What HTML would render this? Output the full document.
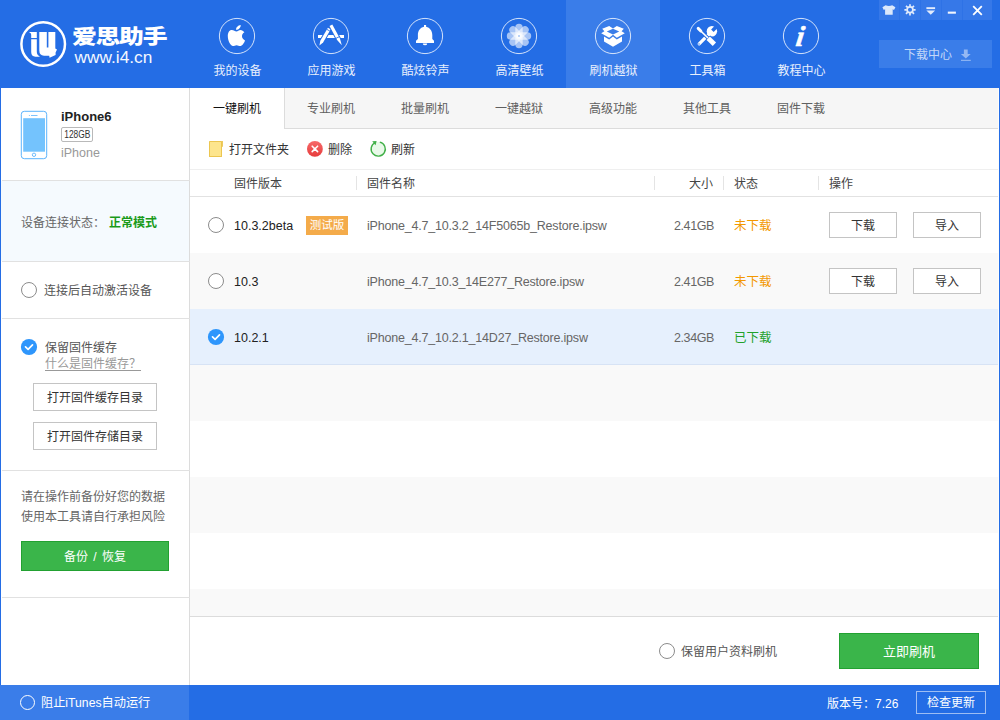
<!DOCTYPE html>
<html lang="zh-CN">
<head>
<meta charset="utf-8">
<title>爱思助手</title>
<style>
*{box-sizing:border-box;margin:0;padding:0}
html,body{width:1000px;height:720px;overflow:hidden;background:#fff}
body{position:relative;font-family:"Liberation Sans","Noto Sans CJK SC",sans-serif;font-size:12px;color:#333}
.abs{position:absolute}
#hdr{position:absolute;left:0;top:0;width:1000px;height:88px;background:#246de5}
.nav{position:absolute;top:0;width:94px;height:88px;text-align:center;color:#fff}
.nav.on{background:#3a7de9}
.nav .ic{position:absolute;left:28px;top:17px;width:38px;height:38px;border:1px solid rgba(255,255,255,.75);border-radius:50%}
.nav .lb{position:absolute;left:.5px;width:94px;top:62px;font-size:12px;line-height:18px;color:#e9f0fd}
.nav svg{position:absolute;left:0;top:0}
#wc{position:absolute;left:879px;top:0;width:113px;height:20px;background:#3678e8}
#wc i{position:absolute;top:0;width:1px;height:20px;background:#2e72e6}
#dl{position:absolute;left:879px;top:40px;width:113px;height:28px;background:#3a7de9;color:#c4d8f8;font-size:12px;line-height:28px}
#side{position:absolute;left:0;top:88px;width:190px;height:597px;background:#fff;border-left:1px solid #246de5;border-right:1px solid #dcdcdc}
.hl{position:absolute;left:1px;width:188px;height:1px;background:#e1e1e1}
.t{position:absolute;white-space:nowrap;line-height:16px}
.radio{position:absolute;width:16px;height:16px;border:1px solid #8c8c8c;border-radius:50%;background:#fff}
.btn{position:absolute;border:1px solid #c4c4c4;background:#fff;text-align:center;font-size:12px;color:#333}
.gbtn{position:absolute;background:#3ab54a;border:1px solid #22a131;color:#fff;text-align:center}
#tabs{position:absolute;left:190px;top:88px;width:810px;height:41px;background:#f6f6f6;border-bottom:1px solid #dcdcdc}
.tab{position:absolute;top:0;width:94px;height:40px;line-height:42px;text-align:center;font-size:12px;color:#606060}
.tab.on{background:#fff;height:41px;width:95px;border-right:1px solid #dcdcdc;color:#111}
#th{position:absolute;left:190px;top:169px;width:808px;height:28px;border-top:1px solid #efefef;border-bottom:1px solid #e2e2e2;background:#fff}
#th .t{top:6px;color:#444}
#th i{position:absolute;top:6px;width:1px;height:14px;background:#e4e4e4}
.row{position:absolute;left:190px;width:808px;height:56px}
.row .fn{letter-spacing:-.2px}
.row .sz{letter-spacing:-.4px;right:284px;color:#666}
.row .st{top:22px;font-size:12px}
.row.g{background:#f9f9f9}
.row.s{background:#e6f0fd;border-bottom:1px solid #d7e3f5}
.row .t{top:21px;font-size:12.5px}
#sb{position:absolute;left:0;top:685px;width:1000px;height:35px;background:#246de5;color:#fff}
#sbl{position:absolute;left:0;top:0;width:189px;height:35px;background:#3a7de9}
#rb{position:absolute;left:998px;top:88px;width:2px;height:597px;background:#246de5;border-left:1px solid #fdfdfd}
</style>
</head>
<body>
<div id="hdr">
  <!-- logo -->
  <svg class="abs" style="left:14px;top:14px" width="60" height="60" viewBox="14 14 60 60">
    <circle cx="43.2" cy="44" r="21.8" fill="none" stroke="#fff" stroke-width="2.5"/>
    <path d="M29.4 32H36.8V38.1H31.2V34.8Q31.2 33.2 29.4 32.6Z M31.2 39.2H36.8V51.5Q36.8 55.4 39.6 56.2V56.7H35.5Q31.2 56.5 31.2 52Z" fill="#fff"/>
    <path d="M39.3 32H46.8V47.5H48.4V32H55.3V48.4L57 49.6L55.6 52.6V55L49.6 57.8L49.2 55.7H44Q39.3 55.5 39.3 50.5Z" fill="#fff"/>
  </svg>
  <div class="t" style="left:72px;top:23px;font-size:23px;line-height:28px;font-weight:900;color:#fff;letter-spacing:-1.2px;transform:scale(1.08,.88);transform-origin:0 0;font-family:'Noto Sans CJK SC','Liberation Sans',sans-serif">爱思助手</div>
  <div class="t" style="left:74.5px;top:48px;font-size:17.3px;line-height:19px;color:#f4f8ff">www.i4.cn</div>

  <div class="nav" style="left:190px"><svg width="50" height="50" viewBox="0 0 50 50" style="left:22px;top:11px"><circle cx="25" cy="25" r="17.6" fill="none" stroke="#fff" stroke-opacity=".8" stroke-width="1"/><path d="M24.5 20.4C23 20.4 21.8 18.9 19.8 18.9C17.2 18.9 15.8 21.5 15.8 25C15.8 29.5 18.5 35 21 35C22.3 35 23 34.2 24.6 34.2C26.2 34.2 26.7 35 28.1 35C30.2 35 32.2 31.8 33 29.4C31 28.6 30 26.8 30 25.3C30 23.6 30.8 22.3 32.4 21.3C31.5 19.8 29.9 18.9 28.5 18.9C26.8 18.9 25.7 20.4 24.5 20.4Z" fill="#fff"/><path d="M24 18.7C23.9 16.4 26 14.2 28.7 13.9C29 16.3 26.6 18.8 24 18.7Z" fill="#fff"/></svg><div class="lb">我的设备</div></div>
  <div class="nav" style="left:284px"><svg width="50" height="50" viewBox="0 0 50 50" style="left:22px;top:11px"><circle cx="25" cy="25" r="17.6" fill="none" stroke="#fff" stroke-opacity=".8" stroke-width="1"/><rect x="12" y="24" width="26" height="3" fill="#fff"/>
<g stroke="#246de5" stroke-width="2" fill="#fff" stroke-linejoin="round" paint-order="stroke">
<path d="M24.7 18.3L21.9 16.7L14.3 29.8L13.4 34.5L17.1 31.4Z"/>
<path d="M26.3 13.4L23.5 14.9L31.1 29L35.8 34.2L33.9 27.5Z"/>
</g>
<path d="M20.9 18.4L23.9 20.1" stroke="#246de5" stroke-width=".9"/><path d="M30 27.4L33.2 25.7" stroke="#246de5" stroke-width=".9"/></svg><div class="lb">应用游戏</div></div>
  <div class="nav" style="left:378px"><svg width="50" height="50" viewBox="0 0 50 50" style="left:22px;top:11px"><circle cx="25" cy="25" r="17.6" fill="none" stroke="#fff" stroke-opacity=".8" stroke-width="1"/><path d="M24 13.9h2.1v1.8C30 16.4 32.3 20 32.3 24V28L34 29.8V32H16V29.8L17.9 28V24C17.9 20 20 16.4 24 15.7Z" fill="#fff"/><path d="M22.9 32.6h4.2v.4a2.1 1.2 0 0 1-4.2 0Z" fill="#fff"/></svg><div class="lb">酷炫铃声</div></div>
  <div class="nav" style="left:472px"><svg width="50" height="50" viewBox="0 0 50 50" style="left:22px;top:11px"><circle cx="25" cy="25" r="17.6" fill="none" stroke="#fff" stroke-opacity=".8" stroke-width="1"/><g transform="translate(25 25)" fill="#fff" fill-opacity=".6"><rect x="-3.7" y="-12.2" width="7.4" height="13" rx="3.7"/><rect x="-3.7" y="-12.2" width="7.4" height="13" rx="3.7" transform="rotate(45)"/><rect x="-3.7" y="-12.2" width="7.4" height="13" rx="3.7" transform="rotate(90)"/><rect x="-3.7" y="-12.2" width="7.4" height="13" rx="3.7" transform="rotate(135)"/><rect x="-3.7" y="-12.2" width="7.4" height="13" rx="3.7" transform="rotate(180)"/><rect x="-3.7" y="-12.2" width="7.4" height="13" rx="3.7" transform="rotate(225)"/><rect x="-3.7" y="-12.2" width="7.4" height="13" rx="3.7" transform="rotate(270)"/><rect x="-3.7" y="-12.2" width="7.4" height="13" rx="3.7" transform="rotate(315)"/></g><circle cx="25" cy="25" r="1" fill="#a9c6f5"/></svg><div class="lb">高清壁纸</div></div>
  <div class="nav on" style="left:566px"><svg width="50" height="50" viewBox="0 0 50 50" style="left:22px;top:11px"><circle cx="25" cy="25" r="17.6" fill="none" stroke="#fff" stroke-opacity=".8" stroke-width="1"/><path d="M14.2 17.7L21.2 14.9L25 17.5L28.8 14.9L35.8 17.7L33.6 20.2L36.8 22.2L28.8 26.8L25 23.8L21.2 26.8L13.2 22.2L16.4 20.2Z M25 17.7L18.75 20.5L25 23.6L31.25 20.5Z" fill="#fff" fill-rule="evenodd"/><path d="M16 25.4L21.2 28.4L25 25.4L28.8 28.4L34 25.4V30.5L25 35.8L16 30.5Z" fill="#fff"/></svg><div class="lb">刷机越狱</div></div>
  <div class="nav" style="left:660px"><svg width="50" height="50" viewBox="0 0 50 50" style="left:22px;top:11px"><circle cx="25" cy="25" r="17.6" fill="none" stroke="#fff" stroke-opacity=".8" stroke-width="1"/><circle cx="29.9" cy="20.2" r="5.2" fill="#fff"/><path d="M30.4 19.7L36.5 13.6" stroke="#246de5" stroke-width="3.6"/><path d="M17.2 32.8L27.6 22.4" stroke="#fff" stroke-width="3.2" stroke-linecap="round"/><circle cx="17" cy="33" r=".7" fill="#246de5"/>
<path d="M26 26.8L33 33.6" stroke="#246de5" stroke-width="6.6"/><path d="M18.5 19.8L26 27" stroke="#246de5" stroke-width="3.4"/>
<path d="M16.2 17.4L18.8 20" stroke="#fff" stroke-width="3" stroke-linecap="round"/><path d="M18.8 20L26 27" stroke="#fff" stroke-width="1.7"/><path d="M26.2 27.2L32.4 33.2" stroke="#fff" stroke-width="4.8"/></svg><div class="lb">工具箱</div></div>
  <div class="nav" style="left:754px"><svg width="50" height="50" viewBox="0 0 50 50" style="left:22px;top:11px"><circle cx="25" cy="25" r="17.6" fill="none" stroke="#fff" stroke-opacity=".8" stroke-width="1"/><text x="24.6" y="34.6" transform="translate(3.4 0) skewX(-8)" text-anchor="middle" font-family="'Liberation Serif',serif" font-weight="bold" font-style="italic" font-size="29" fill="#fff" stroke="#fff" stroke-width=".5">i</text></svg><div class="lb">教程中心</div></div>

  <div id="wc"><i style="left:20px"></i><i style="left:41px"></i><i style="left:62px"></i><i style="left:83px"></i>
  <svg class="abs" style="left:0;top:0" width="113" height="20" viewBox="879 0 113 20">
    <path d="M885.6 5.2Q888.9 6.7 892.2 5.2L895.4 7.2L894 9.9L892.7 9.2V14.7H885.1V9.2L883.8 9.9L882.4 7.2Z" fill="#dce8fb"/>
    <g stroke="#e3ecfc" stroke-width="1.7"><circle cx="910" cy="9.8" r="2.9" fill="none"/><path d="M910 4.2v2.4M910 13v2.4M904.4 9.8h2.4M913.2 9.8h2.4M906 5.8l1.7 1.7M912.3 12.1l1.7 1.7M914 5.8l-1.7 1.7M907.7 12.1l-1.7 1.7"/></g>
    <rect x="926.4" y="7.2" width="8.7" height="1.9" fill="#e3ecfc"/><path d="M926.4 10.6h8.7l-4.35 4.1z" fill="#e3ecfc"/>
    <rect x="947.8" y="11.6" width="8.1" height="2.1" fill="#f2f6fe"/>
    <path d="M973.2 6.2l8.6 8.6M981.8 6.2l-8.6 8.6" stroke="#fff" stroke-width="1.8"/>
  </svg></div>
  <div id="dl"><span class="t" style="left:25px;top:7px;line-height:16px">下载中心</span><svg class="abs" style="left:81px;top:8.5px" width="12" height="13" viewBox="0 0 12 13"><path d="M3.9 0.6h3.8v4.4h3L5.8 9.6L0.9 5h3z" fill="#94b8f3"/><rect x="1" y="10.8" width="9.8" height="1.1" fill="#94b8f3"/></svg></div>
</div>

<div id="side">
  <svg class="abs" style="left:19px;top:22px" width="28" height="50" viewBox="20 110 28 50">
    <rect x="21.3" y="111.3" width="25.4" height="47.4" rx="3" fill="#fff" stroke="#5db4fc" stroke-width="1"/>
    <rect x="23.2" y="118.2" width="21.8" height="33.5" fill="#74c3fd"/>
    <path d="M31 115.5h6.5" stroke="#5db4fc" stroke-width=".8"/><circle cx="29.3" cy="115.5" r=".5" fill="#5db4fc"/>
    <circle cx="34" cy="154.8" r="1.7" fill="none" stroke="#5db4fc" stroke-width=".9"/>
  </svg>
  <div class="t" style="left:60px;top:21px;font-size:13px;font-weight:bold;color:#222">iPhone6</div>
  <div class="t" style="left:60px;top:39px;width:32px;height:15px;border:1px solid #b9b9b9;border-radius:2px;font-size:10.5px;line-height:13px;text-align:center;color:#333"><span style="display:inline-block;transform:scaleX(.8);transform-origin:50% 50%;margin:0 -4px">128GB</span></div>
  <div class="t" style="left:60px;top:57px;font-size:12.5px;color:#999">iPhone</div>
  <div class="hl" style="top:92px"></div>
  <div class="abs" style="left:0;top:93px;width:188px;height:80px;background:#f5fafe"></div>
  <div class="t" style="left:20px;top:127px;color:#666">设备连接状态：</div>
  <div class="t" style="left:108px;top:127px;color:#1a9a1a;font-weight:bold">正常模式</div>
  <div class="hl" style="top:173px"></div>
  <div class="radio" style="left:20px;top:194px"></div>
  <div class="t" style="left:43px;top:195px;color:#555">连接后自动激活设备</div>
  <div class="hl" style="top:230px"></div>
  <svg class="abs" style="left:19px;top:250px" width="18" height="18" viewBox="0 0 18 18"><circle cx="9" cy="9" r="8.1" fill="#2e96fc"/><path d="M5.5 8.9L8.1 11.3L12.5 6.9" fill="none" stroke="#fff" stroke-width="1.7" stroke-linecap="round" stroke-linejoin="round"/></svg>
  <div class="t" style="left:44px;top:252px;color:#555">保留固件缓存</div>
  <div class="t" style="left:44px;top:268px;color:#999;text-decoration:underline;text-underline-offset:2px">什么是固件缓存？</div>
  <div class="btn" style="left:32px;top:295px;width:124px;height:28px;line-height:28px">打开固件缓存目录</div>
  <div class="btn" style="left:32px;top:334px;width:124px;height:28px;line-height:28px">打开固件存储目录</div>
  <div class="hl" style="top:382px"></div>
  <div class="t" style="left:20px;top:401px;color:#666">请在操作前备份好您的数据</div>
  <div class="t" style="left:20px;top:421px;color:#666">使用本工具请自行承担风险</div>
  <div class="gbtn" style="left:20px;top:453px;width:148px;height:30px;line-height:31px;font-size:12px;word-spacing:2px">备份 / 恢复</div>
  <div class="hl" style="top:509px"></div>
</div>

<div id="tabs">
  <div class="tab on" style="left:0">一键刷机</div>
  <div class="tab" style="left:94px">专业刷机</div>
  <div class="tab" style="left:188px">批量刷机</div>
  <div class="tab" style="left:282px">一键越狱</div>
  <div class="tab" style="left:376px">高级功能</div>
  <div class="tab" style="left:470px">其他工具</div>
  <div class="tab" style="left:564px">固件下载</div>
</div>

<svg class="abs" style="left:208px;top:139px" width="16" height="20" viewBox="208 139 16 20"><rect x="209" y="141" width="13" height="16" rx=".6" fill="#ecc650"/><rect x="210" y="142" width="11" height="14" fill="#fde58d"/><rect x="221.6" y="141" width="1.3" height="5.8" fill="#ecc650"/></svg>
<svg class="abs" style="left:306px;top:140px" width="18" height="18" viewBox="0 0 18 18"><defs><linearGradient id="rg" x1="0" y1="0" x2="0" y2="1"><stop offset="0" stop-color="#f76a6a"/><stop offset="1" stop-color="#e63c3c"/></linearGradient></defs><circle cx="8.9" cy="8.9" r="7.9" fill="url(#rg)"/><path d="M6.2 6.2L11.6 11.6M11.6 6.2L6.2 11.6" stroke="#fff" stroke-width="1.6" stroke-linecap="round"/></svg>
<svg class="abs" style="left:369px;top:140px" width="18" height="18" viewBox="369 140 18 18"><circle cx="378.1" cy="149" r="7.2" fill="#e9f9e9"/><path d="M375.2 142.6A7.1 7.1 0 1 0 379.8 142.1" fill="none" stroke="#42b049" stroke-width="1.4"/><path d="M372.2 141.2L376.6 141L375.6 145.2Z" fill="#42b049"/></svg>
<div class="t" style="left:229px;top:142px;color:#333">打开文件夹</div>
<div class="t" style="left:328px;top:142px;color:#333">删除</div>
<div class="t" style="left:391px;top:142px;color:#333">刷新</div>

<div id="th">
  <div class="t" style="left:44px">固件版本</div>
  <i style="left:166px"></i>
  <div class="t" style="left:177px">固件名称</div>
  <i style="left:464px"></i>
  <div class="t" style="left:499px">大小</div>
  <i style="left:533px"></i>
  <div class="t" style="left:544px">状态</div>
  <i style="left:628px"></i>
  <div class="t" style="left:639px">操作</div>
</div>

<div class="row" style="top:197px">
  <div class="radio" style="left:18px;top:20px"></div>
  <div class="t" style="left:44px;color:#222">10.3.2beta</div>
  <div class="t" style="left:116px;top:19px;width:42px;height:19px;background:#f4ab4a;color:#fff;font-size:11.5px;line-height:19px;text-align:center">测试版</div>
  <div class="t fn" style="left:177px;color:#666">iPhone_4.7_10.3.2_14F5065b_Restore.ipsw</div>
  <div class="t sz">2.41GB</div>
  <div class="t st" style="left:544px;color:#f39800">未下载</div>
  <div class="btn" style="left:639px;top:15px;width:68px;height:26px;line-height:26px">下载</div>
  <div class="btn" style="left:723px;top:15px;width:68px;height:26px;line-height:26px">导入</div>
</div>
<div class="row g" style="top:253px">
  <div class="radio" style="left:18px;top:20px"></div>
  <div class="t" style="left:44px;color:#222">10.3</div>
  <div class="t fn" style="left:177px;color:#666">iPhone_4.7_10.3_14E277_Restore.ipsw</div>
  <div class="t sz">2.41GB</div>
  <div class="t st" style="left:544px;color:#f39800">未下载</div>
  <div class="btn" style="left:639px;top:15px;width:68px;height:26px;line-height:26px">下载</div>
  <div class="btn" style="left:723px;top:15px;width:68px;height:26px;line-height:26px">导入</div>
</div>
<div class="row s" style="top:309px">
  <svg class="abs" style="left:17px;top:19px" width="18" height="18" viewBox="0 0 18 18"><circle cx="9" cy="9" r="8.1" fill="#2e96fc"/><path d="M5.5 8.9L8.1 11.3L12.5 6.9" fill="none" stroke="#fff" stroke-width="1.7" stroke-linecap="round" stroke-linejoin="round"/></svg>
  <div class="t" style="left:44px;color:#222">10.2.1</div>
  <div class="t fn" style="left:177px;color:#666">iPhone_4.7_10.2.1_14D27_Restore.ipsw</div>
  <div class="t sz">2.34GB</div>
  <div class="t st" style="left:544px;color:#22a12a">已下载</div>
</div>
<div class="row g" style="top:365px"></div>
<div class="row g" style="top:477px"></div>
<div class="row g" style="top:589px;height:27px"></div>
<div class="abs" style="left:190px;top:616px;width:810px;height:1px;background:#dcdcdc"></div>

<div class="radio" style="left:659px;top:643px"></div>
<div class="t" style="left:681px;top:644px;color:#555">保留用户资料刷机</div>
<div class="gbtn" style="left:839px;top:633px;width:140px;height:36px;line-height:35px;font-size:13px">立即刷机</div>

<div id="rb"></div>
<div id="sb">
  <div id="sbl"></div>
  <div class="radio" style="left:20px;top:10px;width:15px;height:15px;background:none;border-color:#fff"></div>
  <div class="t" style="left:41px;top:10px;font-size:12.2px">阻止iTunes自动运行</div>
  <div class="t" style="left:827px;top:11px;font-size:12px">版本号：7.26</div>
  <div class="btn" style="left:916px;top:6px;width:70px;height:23px;line-height:22px;background:none;color:#fff;border-color:#9dbdf3">检查更新</div>
</div>
</body>
</html>
